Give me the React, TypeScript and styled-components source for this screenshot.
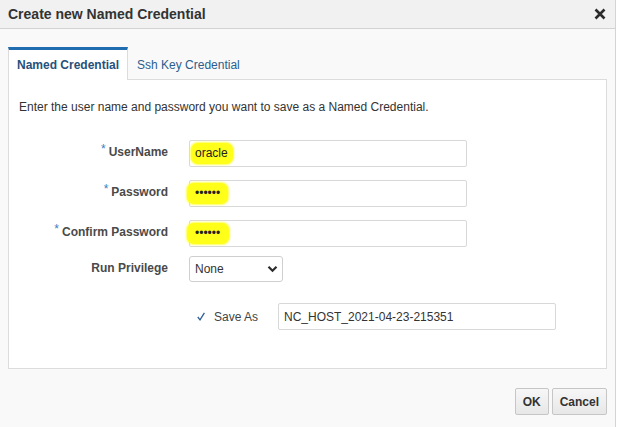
import React from 'react';
import styled, { createGlobalStyle } from 'styled-components';

const GlobalStyle = createGlobalStyle`
  html, body { margin: 0; padding: 0; background: #ffffff; }
  body {
    font-family: "Liberation Sans", Arial, sans-serif;
    font-size: 12px;
    color: #333333;
  }
`;

const Dialog = styled.div`
  width: 616px;
  height: 427px;
  box-sizing: border-box;
  background: #f9f9f9;
  border-right: 1px solid #cdd5dd;
  display: flex;
  flex-direction: column;
`;

const TitleBar = styled.div`
  height: 28px;
  border-bottom: 1px solid #d3d3d3;
  background: #f1f1f1;
  display: flex;
  align-items: center;
  justify-content: space-between;
  padding: 0 9px 0 8px;
`;

const Title = styled.div`
  font-size: 14px;
  font-weight: bold;
  color: #333333;
`;

const CloseButton = styled.button`
  border: 0;
  background: transparent;
  padding: 0;
  width: 12px;
  height: 12px;
  display: flex;
  cursor: pointer;
`;

const Body = styled.div`
  padding: 18px 8px 0 8px;
  display: flex;
  flex-direction: column;
`;

const TabBar = styled.div`
  display: flex;
  align-items: flex-end;
  height: 32px;
`;

const Tab = styled.div<{ $active?: boolean }>`
  height: 33px;
  box-sizing: border-box;
  padding: 0 8px;
  display: flex;
  align-items: center;
  font-size: 12px;
  margin-bottom: -1px;
  position: relative;
  z-index: 1;
  border: 1px solid ${(p) => (p.$active ? '#dcdcdc' : 'transparent')};
  border-top: 3px solid ${(p) => (p.$active ? '#1f6cb0' : 'transparent')};
  border-bottom: none;
  background: ${(p) => (p.$active ? '#ffffff' : 'transparent')};
  color: ${(p) => (p.$active ? '#26517b' : '#2b5e8e')};
  font-weight: ${(p) => (p.$active ? 'bold' : 'normal')};
`;

const Panel = styled.div`
  background: #ffffff;
  border: 1px solid #dcdcdc;
  padding: 20px 10px 38px 10px;
  display: flex;
  flex-direction: column;
`;

const Intro = styled.div`
  line-height: 14px;
  color: #333333;
`;

const Row = styled.div<{ $mt: number }>`
  display: grid;
  grid-template-columns: 149px auto;
  column-gap: 21px;
  align-items: center;
  margin-top: ${(p) => p.$mt}px;
`;

const Label = styled.div`
  justify-self: end;
  font-weight: bold;
  color: #4a4a4a;
  line-height: 14px;
  padding-bottom: 3px;
`;

const Req = styled.span`
  color: #3b7ec3;
  font-weight: normal;
  margin-right: 3px;
  position: relative;
  top: -3px;
`;

const Field = styled.div`
  width: 278px;
  height: 27px;
  box-sizing: border-box;
  border: 1px solid #d8d8d8;
  border-radius: 2px;
  background: #ffffff;
  padding-left: 5px;
  display: flex;
  align-items: center;
  color: #333333;
  font-size: 12px;
`;

const Highlight = styled.span<{ $padL: number; $padR: number }>`
  display: inline-block;
  height: 21px;
  line-height: 21px;
  background: #ffff1a;
  border-radius: 7px;
  box-shadow: 0 0 2px 1px rgba(255, 255, 40, 0.8);
  padding: 0 ${(p) => p.$padR}px 0 ${(p) => p.$padL}px;
  margin-left: -${(p) => p.$padL}px;
  color: #222222;
`;

const Select = styled.div`
  width: 94px;
  height: 26px;
  box-sizing: border-box;
  border: 1px solid #cfcfcf;
  border-radius: 3px;
  background: #ffffff;
  padding: 0 4px 0 5px;
  display: flex;
  align-items: center;
  justify-content: space-between;
  color: #333333;
`;

const SaveAsCell = styled.div`
  display: flex;
  align-items: center;
  padding-left: 8px;
`;

const CheckWrap = styled.span`
  display: flex;
  width: 8px;
  margin-right: 9px;
`;

const SaveAsLabel = styled.span`
  color: #444444;
  width: 45px;
  margin-right: 19px;
`;

const Footer = styled.div`
  display: flex;
  justify-content: flex-end;
  gap: 3px;
  margin-top: 19px;
`;

const Button = styled.button`
  height: 27px;
  box-sizing: border-box;
  padding: 0 7px;
  border: 1px solid #c6c6c6;
  border-radius: 2px;
  background: linear-gradient(#f7f7f7, #e7e7e7);
  font-family: "Liberation Sans", Arial, sans-serif;
  font-size: 12px;
  font-weight: bold;
  color: #333333;
  cursor: pointer;
`;

export default function App() {
  return (
    <>
      <GlobalStyle />
      <Dialog>
        <TitleBar>
          <Title>Create new Named Credential</Title>
          <CloseButton aria-label="Close">
            <svg width="12" height="12" viewBox="0 0 12 12">
              <path d="M1.5 1.5 L10.5 10.5 M10.5 1.5 L1.5 10.5" stroke="#2b2b2b" strokeWidth="2.6" />
            </svg>
          </CloseButton>
        </TitleBar>
        <Body>
          <TabBar>
            <Tab $active>Named Credential</Tab>
            <Tab>Ssh Key Credential</Tab>
          </TabBar>
          <Panel>
            <Intro>Enter the user name and password you want to save as a Named Credential.</Intro>
            <Row $mt={26}>
              <Label><Req>*</Req>UserName</Label>
              <Field><Highlight $padL={4} $padR={5}>oracle</Highlight></Field>
            </Row>
            <Row $mt={13}>
              <Label><Req>*</Req>Password</Label>
              <Field><Highlight $padL={8} $padR={8}>••••••</Highlight></Field>
            </Row>
            <Row $mt={13}>
              <Label><Req>*</Req>Confirm Password</Label>
              <Field><Highlight $padL={8} $padR={9}>••••••</Highlight></Field>
            </Row>
            <Row $mt={9}>
              <Label>Run Privilege</Label>
              <Select>
                <span>None</span>
                <svg width="11" height="8" viewBox="0 0 11 8">
                  <polyline points="1.5,1.8 5.5,5.8 9.5,1.8" fill="none" stroke="#2b2b2b" strokeWidth="2.2" />
                </svg>
              </Select>
            </Row>
            <Row $mt={21}>
              <span />
              <SaveAsCell>
                <CheckWrap>
                  <svg width="8" height="9" viewBox="0 0 8 9">
                    <polyline points="0.8,5 3,7.8 7.4,0.8" fill="none" stroke="#2f5e98" strokeWidth="1.3" />
                  </svg>
                </CheckWrap>
                <SaveAsLabel>Save As</SaveAsLabel>
                <Field>NC_HOST_2021-04-23-215351</Field>
              </SaveAsCell>
            </Row>
          </Panel>
          <Footer>
            <Button>OK</Button>
            <Button>Cancel</Button>
          </Footer>
        </Body>
      </Dialog>
    </>
  );
}
